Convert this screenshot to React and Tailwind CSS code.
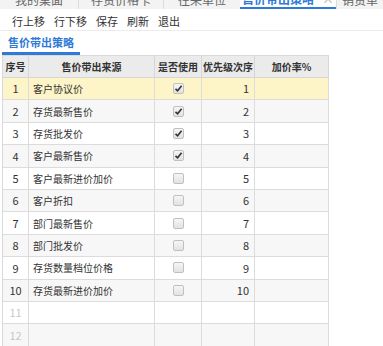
import React from "react";

const rows = [
  { n: 1, src: "客户协议价", on: true, p: 1 },
  { n: 2, src: "存货最新售价", on: true, p: 2 },
  { n: 3, src: "存货批发价", on: true, p: 3 },
  { n: 4, src: "客户最新售价", on: true, p: 4 },
  { n: 5, src: "客户最新进价加价", on: false, p: 5 },
  { n: 6, src: "客户折扣", on: false, p: 6 },
  { n: 7, src: "部门最新售价", on: false, p: 7 },
  { n: 8, src: "部门批发价", on: false, p: 8 },
  { n: 9, src: "存货数量档位价格", on: false, p: 9 },
  { n: 10, src: "存货最新进价加价", on: false, p: 10 },
  { n: 11, src: "", on: null, p: "" },
  { n: 12, src: "", on: null, p: "" },
];

function Check({ on }) {
  return (
    <span className="inline-flex h-[11px] w-[11px] items-center justify-center rounded-[2px] border border-[#c0c0c0] bg-gradient-to-b from-[#f6f6f6] to-[#e2e2e2]">
      {on && (
        <svg width="9" height="9" viewBox="0 0 9 9">
          <path d="M1.5 4.8 L3.6 6.8 L7.6 1.8" fill="none" stroke="#333" strokeWidth="1.6" />
        </svg>
      )}
    </span>
  );
}

export default function App() {
  const font = { fontFamily: '"Noto Sans CJK SC", "Noto Sans", sans-serif' };
  return (
    <div className="h-[346px] w-[383px] overflow-hidden bg-white text-[#333]" style={font}>
      {/* tab bar (clipped) */}
      <div className="flex h-[9px] overflow-hidden bg-[#f3f3f3] text-[12px] text-[#666]">
        <div className="-mt-[10px] flex h-[19px] w-full items-center">
          <div className="flex h-full w-[79px] items-center justify-center border-r border-[#dcdcdc]">我的桌面</div>
          <div className="flex h-full w-[85px] items-center justify-center border-r border-[#dcdcdc]">存货价格卡</div>
          <div className="flex h-full w-[76px] items-center justify-center">往来单位</div>
          <div className="flex h-full w-[96px] items-center justify-center gap-2 border-b-2 border-[#2f7ad6] bg-white font-bold text-[#2f7ad6]">
            售价带出策略<span className="font-normal text-[#aaa]">×</span>
          </div>
          <div className="flex h-full flex-1 items-center justify-center border-l border-[#dcdcdc]">销货单</div>
        </div>
      </div>
      {/* toolbar */}
      <div className="flex h-[22px] items-center gap-[9px] border-b border-[#ececec] pl-[12px] pt-[3px] text-[11px] text-[#333]">
        <span>行上移</span>
        <span>行下移</span>
        <span>保存</span>
        <span>刷新</span>
        <span>退出</span>
      </div>
      {/* subtab */}
      <div className="flex h-[24px] items-end pl-[2px]">
        <div className="flex h-full items-center border-b-[3px] border-[#2f7ad6] px-[6px] pt-[2px] text-[11px] font-bold text-[#2f7ad6]">
          售价带出策略
        </div>
      </div>
      {/* table */}
      <div className="ml-[2px] w-[327px] border-l border-t border-[#d9d9d9] text-[10px]">
        <div className="flex h-[22px] items-center bg-[#ebebeb] font-bold text-[#333]">
          <div className="flex h-full w-[26px] items-center justify-center border-b border-r border-[#d6d6d6]">序号</div>
          <div className="flex h-full w-[126px] items-center justify-center border-b border-r border-[#d6d6d6]">售价带出来源</div>
          <div className="flex h-full w-[47px] items-center justify-center border-b border-r border-[#d6d6d6]">是否使用</div>
          <div className="flex h-full w-[53px] items-center justify-center border-b border-r border-[#d6d6d6]">优先级次序</div>
          <div className="flex h-full w-[74px] items-center justify-center border-b border-r border-[#d6d6d6]">加价率%</div>
        </div>
        {rows.map((r, i) => {
          const bg = r.n === 1 ? "bg-[#fdf5c8]" : i % 2 === 1 ? "bg-[#f7f7f7]" : "bg-white";
          return (
            <div key={r.n} className={`flex h-[22.4px] items-center ${bg}`}>
              <div
                className={`flex h-full w-[26px] items-center justify-center border-b border-r border-[#dcdcdc] text-[11px] ${
                  r.n > 10 ? "text-[#c8c8c8]" : "text-[#333]"
                }`}
              >
                {r.n}
              </div>
              <div className="flex h-full w-[126px] items-center border-b border-r border-[#dcdcdc] pl-[4px] text-[10px] text-[#333]">
                {r.src}
              </div>
              <div className="flex h-full w-[47px] items-center justify-center border-b border-r border-[#dcdcdc]">
                {r.on !== null && <Check on={r.on} />}
              </div>
              <div className="flex h-full w-[53px] items-center justify-end border-b border-r border-[#dcdcdc] pr-[5px] text-[11px] text-[#333]">
                {r.p}
              </div>
              <div className="h-full w-[74px] border-b border-r border-[#dcdcdc]"></div>
            </div>
          );
        })}
      </div>
    </div>
  );
}
